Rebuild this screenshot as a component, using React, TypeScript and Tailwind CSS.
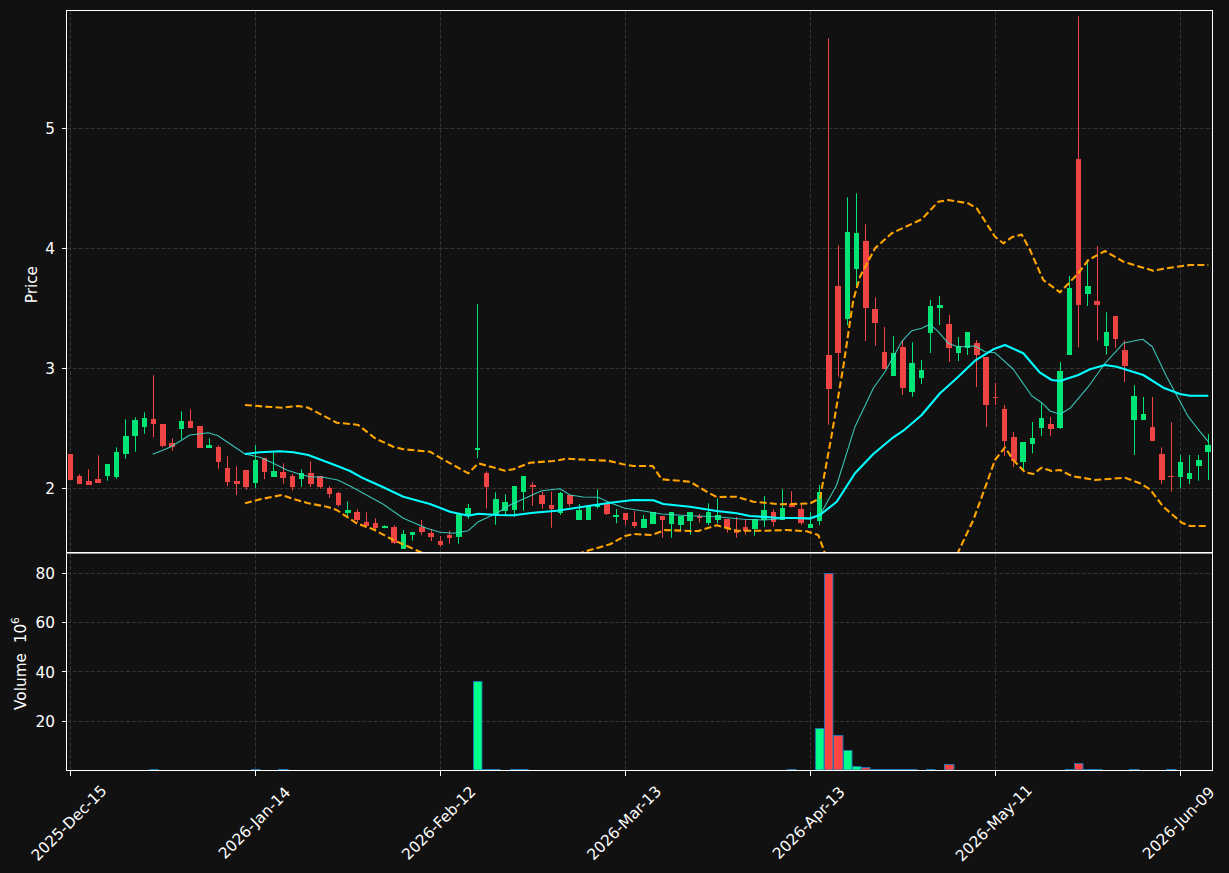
type Candle = [number, number, number, number, 'g' | 'r'];

// wick top, body top, body bottom, wick bottom (page pixels), one per session
const candles: Candle[] = [
  [454, 454, 480, 480, 'r'], [474.3, 476, 484, 484, 'r'], [469.3, 481, 485, 485, 'r'], [455.3, 479, 483, 483, 'r'],
  [464, 464, 476, 480.7, 'g'], [447.3, 452, 477, 478.7, 'g'], [419.3, 436, 454, 458.7, 'g'], [417.3, 420, 436, 451.7, 'g'],
  [412.3, 418, 427, 433.7, 'g'], [375.3, 419, 424, 437.3, 'r'], [424, 424, 446, 447.3, 'r'], [438.3, 443, 447, 450.7, 'r'],
  [411.3, 421, 429, 439.3, 'g'], [409.3, 421, 428, 428, 'r'], [426, 426, 448, 448, 'r'], [438.3, 445, 448, 448, 'g'],
  [445.3, 447, 462, 468.7, 'r'], [456.3, 468, 482, 486, 'r'], [466.3, 481, 484, 495, 'r'], [470, 470, 487, 489.7, 'r'],
  [445.3, 460, 483, 488.3, 'g'], [458, 458, 472, 479.3, 'r'], [452.3, 471, 477, 477, 'g'], [463.3, 472, 478, 483.7, 'r'],
  [474, 476, 487, 490.7, 'r'], [469.3, 473, 479, 486.7, 'g'], [461.3, 473, 484, 487, 'r'], [476, 476, 487, 488.7, 'r'],
  [486, 488, 494, 497.7, 'r'], [491.7, 493, 505, 506.7, 'r'], [501.3, 510, 513, 516.7, 'g'], [509.3, 512, 520, 522.7, 'r'],
  [512.3, 522, 526, 526.7, 'r'], [518.3, 523, 528, 530, 'r'], [525.3, 526, 528, 528.3, 'g'], [525.3, 527, 543, 544, 'r'],
  [530, 534, 549, 549, 'g'], [532, 532, 535, 540.7, 'g'], [520, 527, 532, 534.7, 'r'], [529.3, 533, 537, 541, 'r'],
  [536, 541, 545, 546.7, 'r'], [531, 535, 538, 543.7, 'r'], [513, 514.3, 537, 543.7, 'g'], [504, 508, 516, 518.7, 'g'],
  [304, 448, 450, 458.3, 'g'], [471.3, 473, 487, 508.7, 'r'], [492.3, 499, 515, 524.7, 'g'], [494.3, 502, 511, 515, 'g'],
  [486, 486, 510, 517, 'g'], [476, 476, 492, 510.7, 'g'], [482.3, 485, 487, 505.7, 'r'], [491.7, 495, 504, 508.7, 'r'],
  [491.7, 505, 509, 527.7, 'r'], [491.7, 493, 513, 515, 'g'], [495, 495, 504, 506.7, 'r'], [504, 510, 520, 520, 'g'],
  [506, 506, 520, 520, 'g'], [489.3, 504, 507, 508.5, 'g'], [504, 504, 514, 515, 'r'], [509, 515, 517, 523.3, 'g'],
  [513, 513, 520, 525, 'r'], [511, 522, 526, 527.7, 'r'], [515, 519, 528, 528, 'g'], [512, 512, 524, 524, 'g'],
  [516, 516, 520, 537.7, 'r'], [512, 512, 524, 537.7, 'g'], [516, 516, 525, 530, 'g'], [512, 512, 521, 534.7, 'g'],
  [514, 516, 518, 522.7, 'r'], [503.3, 512, 523, 525, 'g'], [498.3, 515, 520, 523.3, 'g'], [519, 519, 528, 532.7, 'r'],
  [517, 531, 533, 537.7, 'r'], [519, 527, 531, 534.7, 'r'], [519, 519, 529, 535.7, 'g'], [496, 510, 520, 527, 'g'],
  [509.3, 512, 522, 526.7, 'r'], [489.3, 508, 520, 520, 'g'], [491.3, 504, 507, 507.3, 'r'], [504, 509, 523, 525, 'r'],
  [512, 524, 528, 528, 'g'], [485, 492, 521, 525.3, 'g'], [38.3, 355, 389, 424.7, 'r'], [245.3, 286, 353, 376.7, 'r'],
  [197.3, 232, 319, 325.3, 'g'], [193.3, 233, 269, 288, 'g'], [224.3, 241, 308, 341, 'r'], [297.3, 309, 323, 345.7, 'r'],
  [327, 352, 369, 369, 'r'], [336, 353, 376, 376, 'g'], [340, 347, 388, 395, 'r'], [342.3, 363, 392, 396.7, 'g'],
  [360, 370, 378, 384, 'g'], [300, 306, 333, 353, 'g'], [296, 305, 308, 325, 'g'], [315, 324, 348, 362, 'r'],
  [337, 346, 353, 361, 'g'], [332, 332, 348, 355, 'g'], [340, 343, 355, 387, 'r'], [357, 357, 405, 427, 'r'],
  [383, 397, 398, 405, 'r'], [405, 409, 441, 456, 'r'], [432, 437, 461, 467, 'r'], [442, 442, 462, 470, 'g'],
  [422, 438, 444, 453.3, 'g'], [403.3, 418, 428, 436, 'g'], [417, 424, 429, 436, 'r'], [362, 371, 428, 429, 'g'],
  [276, 288, 355, 355, 'g'], [16.3, 159, 305, 347.3, 'r'], [260, 286, 294, 306, 'g'], [246, 301, 305, 340.7, 'r'],
  [312.3, 332, 346, 354.7, 'g'], [316, 316, 339, 347.7, 'r'], [340.3, 350, 366, 382, 'r'], [385.3, 396, 420, 455, 'g'],
  [397, 414, 420, 420, 'g'], [397, 427, 441, 441, 'r'], [447.3, 454, 480, 484, 'r'], [422.3, 476, 477, 491.7, 'r'],
  [455, 462, 477, 488.3, 'g'], [455, 473, 479, 484, 'g'], [455, 460, 466, 480.7, 'g'], [434, 445, 452, 480, 'g'],
];

const cx = (i: number) => 70.25 + 9.25 * i;

const thinLine = '152.7,454.3 170,447.3 190,435 208.3,432.7 218,435.7 245,454 260,457.3 273.3,463.3 286.7,470 300,474.3 310,476.7 323.3,477.3 337.7,480 350,486 383.3,504.3 403.3,518.3 426.7,528.3 440,532.3 453.3,533.3 468.3,530.7 478.3,521.7 496.7,513.3 510,505 523.3,499 541.7,490.7 560,488.7 570,495 583.3,497 598,497.3 610,502.7 625,508.3 643.3,511 661.7,514 690,515.7 716.7,516.7 743.3,519.3 763.3,520 790,518.3 810,519.3 820,515 836.7,485 855,426.7 873.3,388.3 885,371.7 901.7,341.7 911.7,330.7 921.7,328.3 930,324.3 938.3,331.7 948.3,343.3 958.3,347 975,346 985,351.7 995,352.7 1013,369 1031.7,395.7 1041.7,402.7 1050,411 1060,414.3 1070,408.3 1088.3,386.7 1105,363.3 1123.3,343.3 1133.3,341 1142.7,339.3 1152.3,346.7 1166.7,376.7 1188.3,416.7 1200,431.7 1208.3,441.7';
const thickLine = '245,454 260,452.3 280,451.3 293.3,452.3 308.3,455 336.7,465.7 350,471 363.3,478.3 383.3,487.3 403.3,496.7 430,504 450,511.7 468.3,515.7 478.3,513.7 496.7,515 513.3,515.3 533.3,512.7 556.7,510.7 583.3,506.7 610,502.7 633.3,500 653.3,500.3 663.3,504 690,506.7 716.7,511 736.7,513.3 750,516 776.7,517.7 810,518.3 820,515 836.7,501.7 855,473.3 873.3,454 893.3,437.3 903.3,430.7 921.7,415 940,393.3 956.7,378.3 975,360.7 993.3,349.3 1005,345 1023.3,353.3 1040,372.7 1051.7,380 1060,381 1078.3,375 1090,369.3 1105,365 1116.7,366.7 1143.3,375 1163.3,387.7 1180,394 1190,395.7 1208.3,395.7';
const upperBand = '245,405 266.7,406.7 281.7,407.7 298.3,406 308.3,407.7 336.7,422.7 353.3,424.3 358.3,425 375,438.3 393.3,446.7 403.3,449.3 430,451.7 440,457.7 468.3,473.3 478.3,463.3 505,470.7 513.3,469.3 530,462.7 553.3,461 566.7,458.7 590,460 608.3,460.7 623.3,464.3 633.3,466 652.7,466 661.7,479.3 690,481.7 706.7,491.7 716.7,497 736.7,496.7 753.3,501.7 780,504.3 810,503.5 820,498.3 831.7,435 843.3,366.7 853.3,300 860,276.7 875,248.3 891.7,233.3 921.7,219.3 938.3,201.7 948.3,200 968.3,203.3 976.7,208.3 995,236.7 1003.3,243.3 1011.7,237.3 1021.7,234.5 1030,250 1043.3,280 1060,292.3 1078.3,273.3 1088.3,260 1105,251 1123.3,261.7 1153.3,270.7 1170,267.7 1190,265 1208.3,265';
const lowerBand = '245,503.3 260,499.3 281.7,495 293.3,499 308.3,503.3 326.7,506.7 336.7,510 346.7,516.7 356.7,523.3 373.3,529.3 393.3,540 423.3,553.3 460,575 540,575 580,553.3 590,550 610,544.3 625,536 633.3,534 651.7,535 665,530 690,531 698.3,531 716.7,525.3 736.7,530.7 766.7,530.7 786.7,530 806.7,531.3 818.3,535 825,553.3 832,590 950,590 958.3,551.7 973.3,520 986.7,483.3 995,460 1005,447.3 1013.3,460 1025,472.3 1033.3,474 1041.7,467.7 1051.7,471 1060,470 1071.7,476 1095,480 1125,477.7 1140,483.3 1150,489.3 1163.3,506.7 1181.7,522.7 1190,526 1208.3,526';

// bar tops in page pixels; everything else that traded little sits on the axis
const volumes: Record<number, number> = {
  9: 769.5, 20: 769.5, 23: 769.5, 44: 681.5, 45: 769.5, 46: 769.5, 48: 769.5, 49: 769.5, 78: 769.5,
  81: 728.5, 82: 573.5, 83: 735.5, 84: 750.5, 85: 766.5, 86: 767.5,
  87: 769.5, 88: 769.5, 89: 769.5, 90: 769.5, 91: 769.5, 93: 769.5, 95: 764.5,
  108: 769.5, 109: 763.5, 110: 769.5, 111: 769.5, 115: 769.5, 119: 769.5,
};

const gridX = [70.5, 255.5, 440.5, 625.5, 810.5, 995.5, 1180.5];
const dates = ['2025-Dec-15', '2026-Jan-14', '2026-Feb-12', '2026-Mar-13', '2026-Apr-13', '2026-May-11', '2026-Jun-09'];

function Grid({ ys, top, bottom }: { ys: number[]; top: number; bottom: number }) {
  return (
    <g stroke="#333333" strokeWidth="1" strokeDasharray="4.1 1.8">
      {ys.map((y) => <line key={y} x1="67" x2="1212" y1={y} y2={y} />)}
      {gridX.map((x) => <line key={x} x1={x} x2={x} y1={top} y2={bottom} />)}
    </g>
  );
}

function AxisTick({ label, height }: { label: string; height: string }) {
  return (
    <div className={`flex items-center justify-end gap-[7px] ${height}`}>
      <span className="translate-y-px">{label}</span>
      <span className="h-px w-[4px] bg-white" />
    </div>
  );
}

export default function App() {
  return (
    <div className="h-[873px] w-[1229px] overflow-hidden bg-[#111111] pt-[10px] text-[15.3px] text-white [font-family:'DejaVu_Sans',sans-serif]">
      <div className="flex h-[543px]">
        <div className="flex w-[66px] shrink-0">
          <div className="flex w-[44px] shrink-0 items-center justify-end pt-[7px]">
            <span className="rotate-180 [writing-mode:vertical-rl]">Price</span>
          </div>
          <div className="flex-1 pt-[58.5px]">
            {['5', '4', '3', '2'].map((t) => <AxisTick key={t} label={t} height="h-[120px]" />)}
          </div>
        </div>
        <div className="h-full w-[1147px] border border-white">
          <svg className="block h-full w-full" viewBox="67 11 1145 541">
            <Grid ys={[128.5, 248.5, 368.5, 488.5]} top={11} bottom={552} />
            {candles.map(([high, top, bottom, low, side], i) => {
              const color = side === 'g' ? '#00e676' : '#ef4444';
              const left = Math.round(cx(i) - 2.75);
              const right = Math.round(cx(i) + 2.75);
              return (
                <g key={i} fill={color}>
                  <rect x={Math.floor(cx(i))} y={high} width="1" height={low - high} />
                  <rect x={left} y={top} width={right - left} height={Math.max(bottom - top, 1)} />
                </g>
              );
            })}
            <g fill="none" strokeLinejoin="round">
              <polyline points={thinLine} stroke="#40e0d0" strokeOpacity="0.85" strokeWidth="1.1" />
              <polyline points={thickLine} stroke="#00ffff" strokeWidth="2.1" />
              <polyline points={upperBand} stroke="#ffa500" strokeWidth="2.1" strokeDasharray="7 3.2" />
              <polyline points={lowerBand} stroke="#ffa500" strokeWidth="2.1" strokeDasharray="7 3.2" />
            </g>
          </svg>
        </div>
      </div>

      <div className="flex h-[218px]">
        <div className="flex w-[66px] shrink-0">
          <div className="flex w-[33px] shrink-0 items-center justify-end pt-[3px]">
            <span className="rotate-180 whitespace-pre [writing-mode:vertical-rl]">
              Volume  10<sup className="left-[5px] top-0 text-[10.7px]">6</sup>
            </span>
          </div>
          <div className="-mt-[4px] flex-1">
            {['80', '60', '40', '20'].map((t) => <AxisTick key={t} label={t} height="h-[49.2px]" />)}
          </div>
        </div>
        <div className="h-full w-[1147px] border border-white border-t-white/60">
          <svg className="block h-full w-full" viewBox="67 554 1145 216">
            <Grid ys={[573.5, 622.5, 671.5, 721.5]} top={554} bottom={770} />
            {Object.entries(volumes).map(([key, top]) => {
              const i = Number(key);
              const left = Math.round(cx(i) - 4.6);
              const right = Math.round(cx(i) + 4.6);
              return (
                <rect
                  key={key}
                  x={left + 0.5}
                  y={top}
                  width={right - left - 0.5}
                  height={770 - top}
                  fill={candles[i][4] === 'g' ? '#00ff88' : '#ff4444'}
                  stroke="#1f77b4"
                  strokeWidth="0.9"
                />
              );
            })}
          </svg>
        </div>
      </div>

      <div className="-ml-[22px] flex">
        {dates.map((d) => (
          <div key={d} className="flex w-[185px] shrink-0 flex-col items-center">
            <span className="h-[5px] w-px bg-white" />
            <span className="mt-[36px] -translate-x-[1px] -rotate-45 whitespace-nowrap">{d}</span>
          </div>
        ))}
      </div>
    </div>
  );
}
